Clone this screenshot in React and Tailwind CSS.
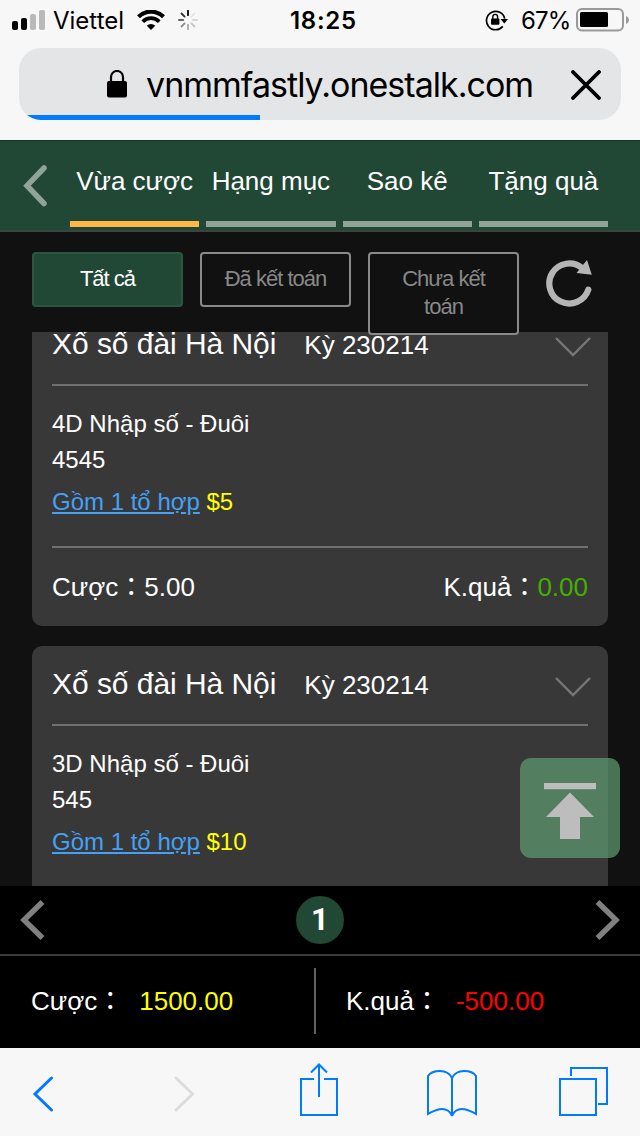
import { clsx } from 'clsx';

const tabs = ['Vừa cược', 'Hạng mục', 'Sao kê', 'Tặng quà'];
const filters = ['Tất cả', 'Đã kết toán', 'Chưa kết toán'];

const bets = [
  { id: 1, type: '4D Nhập số - Đuôi', numbers: '4545', amount: '$5', stake: '5.00', result: '0.00' },
  { id: 2, type: '3D Nhập số - Đuôi', numbers: '545', amount: '$10', stake: '10.00', result: '0.00' },
];

const spinnerColors = ['#000', '#e4e4e4', '#d6d6d6', '#c4c4c4', '#a8a8a8', '#8c8c8c', '#666', '#333'];

const StatusBar = () => (
  <div className="flex h-10 items-center pl-3 pr-[11px] text-black">
    <div className="flex h-5 w-[33px] shrink-0 items-end gap-[3px]">
      <span className="h-[9px] w-1.5 rounded-[2px] bg-black" />
      <span className="h-3 w-1.5 rounded-[2px] bg-black" />
      <span className="h-4 w-1.5 rounded-[2px] bg-[#b9b9b9]" />
      <span className="h-5 w-1.5 rounded-[2px] bg-[#b9b9b9]" />
    </div>
    <span className="ml-2 mt-0.5 w-[76px] shrink-0 text-[24px]">Viettel</span>
    <svg className="ml-2 shrink-0" width="28" height="20" viewBox="0 0 28 20" fill="none">
      <path d="M1.5 6.800a17.7 17.7 0 0 1 25 0" stroke="#000" strokeWidth="4.2" />
      <path d="M5.800 11.700a11.400 11.400 0 0 1 16.400 0" stroke="#000" strokeWidth="3.8" />
      <path d="M14 20l-4.200-4.200a6 6 0 0 1 8.400 0z" fill="#000" />
    </svg>
    <svg className="ml-[13px] shrink-0" width="20" height="20" viewBox="-10 -10 20 20">
      {spinnerColors.map((color, i) => (
        <line
          key={color}
          y1="-9.200"
          y2="-4.800"
          stroke={color}
          strokeWidth="1.8"
          strokeLinecap="round"
          transform={`rotate(${i * 45})`}
        />
      ))}
    </svg>
    <span className="ml-[92px] mt-0.5 w-[70px] shrink-0 text-[24px] font-semibold tracking-[0.7px]">18:25</span>
    <svg className="ml-auto shrink-0" width="24" height="22" viewBox="0 0 24 22" fill="none">
      <path d="M17.8 17.4A9.2 9.2 0 1 1 19.7 9.6" stroke="#000" strokeWidth="1.7" />
      <path d="M15.500 10h7.500l-3.700 4.500z" fill="#000" />
      <rect x="6" y="9.5" width="8.4" height="6.3" rx="1" fill="#000" />
      <path d="M7.8 10V7.8a2.4 2.4 0 0 1 4.8 0V10" stroke="#000" strokeWidth="1.4" />
    </svg>
    <span className="ml-3 mt-0.5 w-[50px] shrink-0 whitespace-nowrap text-[24px] tracking-[-0.8px]">67%</span>
    <svg className="ml-[5px] shrink-0" width="53" height="24" viewBox="0 0 53 24">
      <rect x="1" y="1" width="46" height="21.5" rx="5" fill="none" stroke="#999" strokeWidth="2" />
      <rect x="4" y="4" width="28" height="15" rx="1.5" fill="#000" />
      <path d="M50 8v8c4-2 4-6 0-8z" fill="#999" />
    </svg>
  </div>
);

const AddressBar = () => (
  <div className="mx-[19px] mt-2 flex h-[72px] flex-col overflow-hidden rounded-[22px] bg-[#e4e5e7]">
    <div className="flex h-[67px] items-center pl-[88px] pr-5">
      <svg className="mt-1 shrink-0" width="20" height="28" viewBox="0 0 20 28" fill="none">
        <rect x="0" y="11" width="20" height="16.5" rx="2" fill="#000" />
        <path d="M4 12V7a6 6 0 0 1 12 0v5" stroke="#000" strokeWidth="2.2" />
      </svg>
      <span className="ml-[19px] mt-1.5 whitespace-nowrap text-[34px] tracking-[-0.98px] text-black">
        vnmmfastly.onestalk.com
      </span>
      <svg className="ml-auto mt-1.5 shrink-0" width="30" height="30" viewBox="0 0 30 30">
        <path d="M2 2l26 26M28 2L2 28" stroke="#000" strokeWidth="3.800" strokeLinecap="round" />
      </svg>
    </div>
    <div className="h-[5px] w-[241px] bg-[#007aff]" />
  </div>
);

const TabHeader = () => (
  <div className="flex h-[92px] border-b-2 border-t border-b-[#3a4540] border-t-[#143024] bg-[#214735]">
    <svg className="ml-[23px] mt-6 shrink-0" width="25" height="42" viewBox="0 0 25 42" fill="none">
      <path d="M21 3L4 20.7 21 38.5" stroke="#91a49a" strokeWidth="5.5" strokeLinecap="round" />
    </svg>
    <div className="ml-[22px] grid w-[538px] grid-cols-4 gap-[7px]">
      {tabs.map((tab, i) => (
        <div key={tab} className="flex h-[86px] flex-col items-center justify-between">
          <span className="pt-[25px] text-[26px] leading-[30px] whitespace-nowrap text-white">{tab}</span>
          <span className={clsx('h-1.5 w-full', i === 0 ? 'bg-[#ffb74a]' : 'bg-[#90a399]')} />
        </div>
      ))}
    </div>
  </div>
);

const FilterBar = () => (
  <div className="relative z-10 flex h-[100px] items-start gap-[17px] bg-[#111] pl-8 pt-5">
    {filters.map((filter, i) => (
      <button
        key={filter}
        type="button"
        className={clsx(
          'w-[151px] shrink-0 rounded-[4px] border-2 px-5 pb-3 pt-[11px] text-[22px] leading-7 tracking-[-1px]',
          i === 0 ? 'border-[#2a5640] bg-[#214735] text-white' : 'border-[#8a8a8a] bg-[#111] text-[#888]',
        )}
      >
        {filter}
      </button>
    ))}
    <svg className="ml-[10px] mt-2 shrink-0" width="47" height="47" viewBox="0 0 47 47" fill="none">
      <path
        d="M42.3 29.800A20 20 0 1 1 36 8"
        stroke="#b5b5b5"
        strokeWidth="6.200"
        strokeLinecap="round"
      />
      <path d="M41 0l4.800 14.800-15.300-1.800z" fill="#b5b5b5" />
    </svg>
  </div>
);

const BetCard = ({ bet }) => (
  <div className="h-80 shrink-0 rounded-[10px] bg-[#383838] px-5 text-white">
    <div className="flex h-20 items-center border-b-2 border-[#707070]">
      <span className="mt-[-2px] text-[30px] leading-9 tracking-[-0.05px]">Xổ số đài Hà Nội</span>
      <span className="ml-7 text-[26px] leading-9">Kỳ 230214</span>
      <svg className="ml-auto mr-[-4px] mt-1" width="38" height="22" viewBox="0 0 38 22" fill="none">
        <path d="M2 2l17 17L36 2" stroke="#777" strokeWidth="2.4" />
      </svg>
    </div>
    <div className="h-[162px] border-b-2 border-[#707070] pt-5 text-[24px] leading-9">
      <p>{bet.type}</p>
      <p>{bet.numbers}</p>
      <p className="mt-1.5">
        <a className="text-[#45a1f5] underline">Gồm 1 tổ hợp</a>{' '}
        <span className="text-[#ff0]">{bet.amount}</span>
      </p>
    </div>
    <div className="flex h-[78px] items-center justify-between text-[26px]">
      <span>Cược：{bet.stake}</span>
      <span>
        K.quả：<span className="text-[#43b000]">{bet.result}</span>
      </span>
    </div>
  </div>
);

const BackToTop = () => (
  <button
    type="button"
    className="absolute right-5 top-[426px] flex h-[100px] w-[100px] items-center justify-center rounded-[11px] bg-[#5f9c70]/70 pt-1.5"
  >
    <svg width="52" height="58" viewBox="0 0 52 58" fill="#bdbdbd">
      <rect x="0" y="1" width="52" height="6.2" />
      <path d="M26 10.500l24 24.500H36v22H16V35H2z" />
    </svg>
  </button>
);

const Pager = () => (
  <div className="flex h-[70px] items-center justify-between border-b-2 border-[#3a3a3a] bg-black px-5">
    <svg width="25" height="40" viewBox="0 0 25 40" fill="none">
      <path d="M22.500 2L4 20l18.500 18" stroke="#808080" strokeWidth="5.500" />
    </svg>
    <span className="flex h-12 w-12 items-center justify-center rounded-full bg-[#214735] font-[Roboto,sans-serif] text-[31px] font-bold text-white">
      1
    </span>
    <svg width="25" height="40" viewBox="0 0 25 40" fill="none">
      <path d="M2.500 2L21 20 2.500 38" stroke="#808080" strokeWidth="5.500" />
    </svg>
  </div>
);

const Totals = () => (
  <div className="flex h-[92px] items-center bg-black text-[26px] text-white">
    <div className="mt-[-2px] flex w-[314px] pl-[31px]">
      <span>Cược：</span>
      <span className="ml-4 text-[#ff0]">1500.00</span>
    </div>
    <div className="mt-[-2px] h-[66px] w-0.5 bg-[#606060]" />
    <div className="mt-[-2px] flex pl-[30px]">
      <span>K.quả：</span>
      <span className="ml-4 text-[#f00]">-500.00</span>
    </div>
  </div>
);

const BrowserToolbar = () => (
  <div className="flex h-[88px] items-start bg-[#f7f7f7] pl-8 pt-3">
    <svg className="mt-4 shrink-0" width="22" height="38" viewBox="0 0 22 38" fill="none">
      <path d="M19.500 2L3 18l16.500 16" stroke="#007aff" strokeWidth="3" strokeLinecap="round" />
    </svg>
    <svg className="ml-[119px] mt-4 shrink-0" width="22" height="38" viewBox="0 0 22 38" fill="none">
      <path d="M3 2l16.500 16L3 34" stroke="#dcdcdc" strokeWidth="3" strokeLinecap="round" />
    </svg>
    <svg className="ml-[105px] mt-[2px] shrink-0" width="38" height="54" viewBox="0 0 38 54" fill="none" stroke="#007aff" strokeWidth="2">
      <path d="M14 17H1v36h36V17H24" />
      <path d="M19 35V2M11 10.500L19 2.500l8 8" />
    </svg>
    <svg className="ml-[89px] mt-2 shrink-0" width="50" height="50" viewBox="0 0 50 50" fill="none" stroke="#007aff" strokeWidth="2">
      <path d="M25 10C22 4 17 3 13 3 7 3 3 5 1 8v38c4-2 8-5 14-5 5 0 8 2 10 7V10z" />
      <path d="M25 10C28 4 33 3 37 3c6 0 10 2 12 5v38c-4-2-8-5-14-5-5 0-8 2-10 7" />
    </svg>
    <svg className="ml-[82px] mt-[7px] shrink-0" width="49" height="49" viewBox="0 0 49 49" fill="none" stroke="#007aff" strokeWidth="2">
      <rect x="1" y="12" width="36" height="36" />
      <path d="M12 9V1h36v36h-9" />
    </svg>
  </div>
);

const App = () => (
  <div className="flex h-[1136px] w-[640px] flex-col overflow-hidden bg-[#111] font-['Liberation_Sans','Noto_Sans_CJK_TC',sans-serif]">
    <div className="h-[140px] shrink-0 bg-[#f7f7f7] font-[Inter,sans-serif]">
      <StatusBar />
      <AddressBar />
    </div>
    <TabHeader />
    <FilterBar />
    <div className="relative h-[554px] shrink-0 overflow-hidden px-8">
      <div className="mt-[-26px] flex flex-col gap-5">
        {bets.map((bet) => (
          <BetCard key={bet.id} bet={bet} />
        ))}
      </div>
      <BackToTop />
    </div>
    <Pager />
    <Totals />
    <BrowserToolbar />
  </div>
);

export default App;
